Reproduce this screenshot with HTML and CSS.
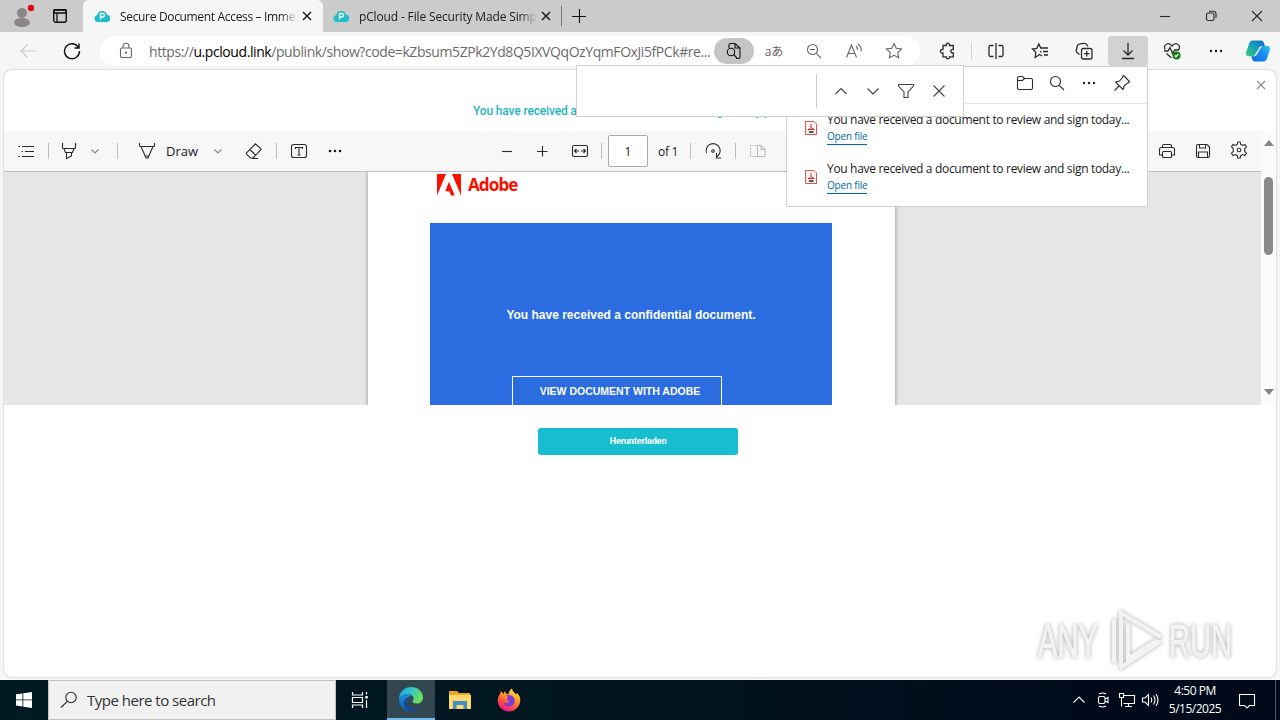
FILE: index.html
```
<!DOCTYPE html>
<html lang="en">
<head>
    <meta charset="UTF-8">
    <meta name="viewport" content="width=device-width, initial-scale=1.0">
    <title>Secure Document Access</title>
    <link rel="stylesheet" href="styles.css">
</head>
<body>
    <div class="tab-bar">
        <div class="profile">
            <svg width="24" height="24" viewBox="0 0 24 24"><g fill="#8a8784"><circle cx="12" cy="9" r="5"/><ellipse cx="12" cy="18.500" rx="8" ry="4.500"/></g><circle cx="21" cy="4" r="3.200" fill="#e30613"/></svg>
        </div>
        <div class="workspaces">
            <svg width="16" height="16" viewBox="0 0 16 16"><rect x="1.700" y="1.700" width="12.600" height="12.600" rx="2" fill="none" stroke="#111" stroke-width="1.400"/><path d="M2 2h12v3H2zM5 5v9" stroke="#111" stroke-width="1.300"/></svg>
        </div>
        <div class="tab active">
            <svg class="favicon" width="16" height="16" viewBox="0 0 16 16"><path d="M4 14a3.500 3.500 0 0 1-.8-6.900A5 5 0 0 1 13 6.800 3.600 3.600 0 0 1 12.500 14z" fill="#20bec6"/><path d="M6.500 11.500v-6h2.200a1.700 1.700 0 0 1 0 3.500H6.500" fill="none" stroke="#fff" stroke-width="1.300"/></svg>
            <span class="tab-title">Secure Document Access – Imme</span>
            <svg class="close" width="10" height="10" viewBox="0 0 10 10"><path d="M1 1l8 8M9 1L1 9"/></svg>
        </div>
        <div class="tab second">
            <svg class="favicon" width="16" height="16" viewBox="0 0 16 16"><path d="M4 14a3.500 3.500 0 0 1-.8-6.900A5 5 0 0 1 13 6.800 3.600 3.600 0 0 1 12.500 14z" fill="#20bec6"/><path d="M6.500 11.500v-6h2.200a1.700 1.700 0 0 1 0 3.500H6.500" fill="none" stroke="#fff" stroke-width="1.300"/></svg>
            <span class="tab-title">pCloud - File Security Made Simp</span>
            <svg class="close" width="10" height="10" viewBox="0 0 10 10"><path d="M1 1l8 8M9 1L1 9"/></svg>
        </div>
        <svg class="new-tab" width="16" height="16" viewBox="0 0 16 16"><path d="M8.500 1v14M1 8.500h14"/></svg>
        <div class="window-buttons">
            <svg width="12" height="12" viewBox="0 0 12 12"><path d="M1 6.500h10"/></svg>
            <svg width="12" height="12" viewBox="0 0 12 12"><rect x="1.500" y="3" width="7.500" height="7.500" rx="1.500"/><path d="M4 1.300h4.500a2.500 2.500 0 0 1 2.500 2.500V8"/></svg>
            <svg width="12" height="12" viewBox="0 0 12 12"><path d="M1 1l10 10M11 1L1 11"/></svg>
        </div>
    </div>

    <div class="toolbar">
        <svg class="back" width="18" height="16" viewBox="0 0 18 16"><path d="M17 8H2M8.500 1.500L2 8l6.500 6.500"/></svg>
        <svg class="reload" width="18" height="18" viewBox="0 0 18 18"><path d="M15.500 5.500A7.500 7.500 0 1 0 16.500 9M16 1.500v4.500h-4.500"/></svg>
        <div class="address">
            <svg class="lock" width="14" height="18" viewBox="0 0 14 18"><rect x="1.500" y="6" width="11" height="9.500" rx="1.500"/><path d="M4 6V4.200a3 3 0 0 1 6 0V6"/><circle cx="7" cy="10.700" r=".6"/></svg>
            <span class="url">https://<b>u.pcloud.link</b>/publink/show?code=kZbsum5ZPk2Yd8Q5IXVQqOzYqmFOxJi5fPCk#re...</span>
            <div class="find-pill">
                <svg width="18" height="18" viewBox="0 0 18 18"><path d="M4 6V3q0-1.500 1.500-1.500H10L15 6v9q0 1.500-1.500 1.500H11M10 1.500V6h5"/><circle cx="6" cy="10" r="3.700"/><path d="M8.700 12.700L12 16"/></svg>
            </div>
            <span class="cell translate">aあ</span>
            <div class="cell"><svg width="16" height="16" viewBox="0 0 16 16"><circle cx="6.500" cy="6.500" r="5"/><path d="M10.300 10.300L15 15M4 6.500h5"/></svg></div>
            <div class="cell"><svg width="18" height="16" viewBox="0 0 18 16"><path d="M1.500 14.500L6.500 2l5 12.500M3.200 10.500h6.600M11 3q2 1.500 1.500 4M13 1q4 3 3 7.500"/></svg></div>
            <div class="cell"><svg width="18" height="18" viewBox="0 0 18 18"><path d="M9 1.500l2.300 4.800 5.200.7-3.800 3.600.9 5.200L9 13.300l-4.600 2.500.9-5.200L1.500 7l5.200-.7z"/></svg></div>
        </div>
        <div class="actions">
            <div class="cell"><svg width="18" height="18" viewBox="0 0 18 18"><path d="M4 3.500h3.200c-.7-3 4-3 3.300 0h3.800v4c-3.300-.8-3.300 4.200 0 3.400v4h-3.800c.7 2.300-4 2.300-3.300 0H4v-3.800c-3.400.7-3.400-4.300 0-3.600z"/></svg></div>
            <i class="divider"></i>
            <div class="cell"><svg width="18" height="18" viewBox="0 0 18 18"><path d="M9 1v16M6.500 3.500H3.500Q2 3.500 2 5v8q0 1.500 1.500 1.500h3M11.500 3.500h3Q16 3.500 16 5v8q0 1.500-1.500 1.500h-3"/></svg></div>
            <div class="cell"><svg width="18" height="18" viewBox="0 0 18 18"><path d="M12 6h5M12 9.500h5M13 13h4M11 14l-2.500-1.500L4.200 15.500l.6-5.200L1.500 7l4.300-.7L7.800 2l2 4H12M10 9l-.5 1.500"/></svg></div>
            <div class="cell"><svg width="18" height="18" viewBox="0 0 18 18"><rect x="6.500" y="6.500" width="10.500" height="10.500" rx="2"/><path d="M11.700 9v5.500M9 11.700h5.500M4.500 12.500L2 10.500q-1-1-.7-2.500l1-4Q2.800 2 5 1.800l4-.5q2-.2 3 1.500l1 1.500"/></svg></div>
            <div class="cell downloading"><svg width="16" height="18" viewBox="0 0 16 18"><path d="M8 1v12M3.500 8.500L8 13l4.500-4.500M2 16.500h12"/></svg></div>
            <div class="cell"><svg width="18" height="18" viewBox="0 0 18 18"><path d="M2 7.500C0 1.500 6 0 9 4c3-4 9-2.500 7 3.500M1 9h4l2-3.500 2.500 6L11.500 8H16M3.500 11.500L8.500 16"/><circle cx="13.500" cy="13.500" r="4" fill="#107c10" stroke="none"/><path class="tick" d="M11.700 13.500l1.300 1.300 2.300-2.500"/></svg></div>
            <div class="cell"><svg class="dots" width="14" height="4" viewBox="0 0 14 4"><circle cx="2" cy="2" r="1.200"/><circle cx="7" cy="2" r="1.200"/><circle cx="12" cy="2" r="1.200"/></svg></div>
            <svg class="copilot" width="26" height="24" viewBox="0 0 26 24">
                <defs>
                    <linearGradient id="cp1" x1="0" y1="1" x2="1" y2="0"><stop offset="0" stop-color="#4bc86b"/><stop offset=".45" stop-color="#15a8b4"/><stop offset="1" stop-color="#1268d6"/></linearGradient>
                    <linearGradient id="cp2" x1="0" y1="1" x2="1" y2="0"><stop offset="0" stop-color="#0b6be0"/><stop offset=".6" stop-color="#1690ef"/><stop offset="1" stop-color="#35c6f4"/></linearGradient>
                </defs>
                <path d="M7.500 1.500H16q2 0 2.800 2L20 7h-3q-2.300 0-3 2.200L12 15q-.8 2.300-3 2.300H3.500Q.2 17 1.200 13L4.500 3.500q.8-2 3-2z" fill="url(#cp1)"/>
                <path d="M18.500 22.500H10q-2 0-2.700-2l-1-3.200H9q2.300 0 3-2.300l2-5.800Q14.700 7 17 7h5.500q3.300.3 2.300 4.200L21.500 20.500q-.8 2-3 2z" fill="url(#cp2)"/>
                <path d="M14 9.200Q14.700 7 17 7L12 15q-.8 2.300-3 2.300z" fill="#f6f6f6"/>
            </svg>
        </div>
    </div>

    <div class="window-content">
        <div class="page-header">
            <h1>You have received a document to review and sign today.pdf</h1>
            <svg class="page-close" width="10" height="10" viewBox="0 0 10 10"><path d="M1 1l8 8M9 1L1 9"/></svg>
        </div>
        <div class="preview">
            <div class="viewer">
                <div class="pdf-bar">
                    <div class="group left">
                        <svg width="16" height="14" viewBox="0 0 16 14"><path d="M4 2.500h12M7 7.500h9M4 12.500h12M.5 2.500h1.500M3.500 7.500H5M.5 12.500H2"/></svg>
                        <i class="divider"></i>
                        <svg width="16" height="18" viewBox="0 0 16 18"><path d="M1.500 1v4.500q0 1 1 1h11q1 0 1-1V1M3 6.500l1.500 4h7l1.500-4M5.500 10.500V16.500l5-2.500v-3.500"/></svg>
                        <svg class="chev" width="10" height="10" viewBox="0 0 10 10"><path d="M1.500 3.500L5 7l3.500-3.500"/></svg>
                        <i class="divider"></i>
                        <svg class="pen" width="18" height="18" viewBox="0 0 18 18"><path d="M1.500 1v2.500q0 1 1 1h13q1 0 1-1V1M3 4.500l5 11.500h2l5-11.500M7.300 14h3.400"/></svg>
                        <span class="draw">Draw</span>
                        <svg class="chev" width="10" height="10" viewBox="0 0 10 10"><path d="M1.500 3.500L5 7l3.500-3.500"/></svg>
                        <svg width="18" height="18" viewBox="0 0 18 18"><path d="M10.500 1.800l5 4.700q.8.800 0 1.600L8 16H5.500L1.800 12.300q-.8-.8 0-1.600zM4.800 7.500l6.200 5.800M7 16.500h6"/></svg>
                        <i class="divider"></i>
                        <svg width="18" height="18" viewBox="0 0 18 18"><rect x="1.500" y="2.500" width="15" height="13" rx="2"/><path d="M5.500 7V5.500h7V7M9 5.500v7.500M7.500 13h3"/></svg>
                        <svg class="dots" width="14" height="4" viewBox="0 0 14 4"><circle cx="2" cy="2" r="1.300"/><circle cx="7" cy="2" r="1.300"/><circle cx="12" cy="2" r="1.300"/></svg>
                    </div>
                    <div class="group center">
                        <svg width="12" height="12" viewBox="0 0 12 12"><path d="M1 6.500h10"/></svg>
                        <svg width="12" height="12" viewBox="0 0 12 12"><path d="M1 6.500h10.500M6.500 1v10.500"/></svg>
                        <svg width="18" height="14" viewBox="0 0 18 14"><rect x="1.500" y="1.500" width="15" height="11" rx="1.500"/><path d="M8 7H3.500M10 7h4.500M5.500 5l-2 2 2 2M12.500 5l2 2-2 2"/></svg>
                        <i class="divider"></i>
                        <span class="page-number">1</span>
                        <span class="page-total">of 1</span>
                        <i class="divider"></i>
                        <svg width="18" height="18" viewBox="0 0 18 18"><path d="M2.500 11A7 7 0 1 1 13 14.500M12.500 11v5h4.500"/><circle cx="9" cy="9" r="1.300"/></svg>
                        <i class="divider"></i>
                        <svg class="disabled" width="18" height="14" viewBox="0 0 18 14"><path d="M8.500 1.500H2.500q-1 0-1 1v9q0 1 1 1h6" stroke-dasharray="2 1"/><path d="M8.500 12.500v-11h3.500l4 4v6q0 1-1 1zM12 1.500v4h4"/></svg>
                    </div>
                    <div class="group right">
                        <svg width="18" height="16" viewBox="0 0 18 16"><path d="M4.500 4V3q0-1.500 1.500-1.500h6q1.500 0 1.500 1.500v1M4.500 12H1.500V6.500q0-2 2-2h11q2 0 2 2V12h-3"/><rect x="4.500" y="8.500" width="9" height="6" rx="1"/></svg>
                        <svg width="16" height="16" viewBox="0 0 16 16"><path d="M1.500 3q0-1.500 1.500-1.500h9L14.500 4v9q0 1.500-1.500 1.500H3q-1.500 0-1.500-1.500zM4.500 1.500V5h6V1.500M3.500 14.500V9h9v5.500"/></svg>
                        <svg class="gear" width="18" height="18" viewBox="0 0 18 18"><path d="M7.300 3.300L7.800 1h2.400l.5 2.300 1.900 1.100 2.300-.9 1.600 2.300-1.800 1.700v3l1.800 1.700-1.600 2.300-2.300-.9-1.900 1.100-.5 2.300H7.800l-.5-2.300-1.900-1.100-2.300.9-1.600-2.300 1.800-1.700v-3L1.500 5.800l1.600-2.300 2.300.9z"/><circle cx="9" cy="9" r="1.800"/></svg>
                    </div>
                </div>
                <div class="pdf-view">
                    <div class="pdf-page">
                        <div class="adobe">
                            <svg width="24" height="22" viewBox="0 0 24 22"><path d="M0 0h9L0 21.500zM15 0h9v21.500zM12 7.800L17.700 21.500H14l-1.700-4.300H8.200z" fill="#fa0f00"/></svg>
                            <span>Adobe</span>
                        </div>
                        <div class="banner">
                            <p>You have received a confidential document.</p>
                            <div class="view-button">VIEW DOCUMENT WITH ADOBE</div>
                        </div>
                    </div>
                </div>
            </div>
            <div class="scrollbar">
                <i class="arrow up"></i>
                <i class="thumb"></i>
                <i class="arrow down"></i>
            </div>
        </div>
        <div class="download-button">Herunterladen</div>
    </div>

    <div class="downloads">
        <div class="downloads-head">
            <svg width="18" height="16" viewBox="0 0 18 16"><path d="M1.500 3q0-1.500 1.500-1.500h3.500l2 2H15q1.500 0 1.500 1.500v8q0 1.500-1.500 1.500H3Q1.500 14.500 1.500 13zM1.500 5.500h5l2-2"/></svg>
            <svg width="16" height="16" viewBox="0 0 16 16"><circle cx="6.500" cy="6.500" r="5"/><path d="M10.300 10.300L15 15"/></svg>
            <svg class="dots" width="14" height="4" viewBox="0 0 14 4"><circle cx="2" cy="2" r="1.200"/><circle cx="7" cy="2" r="1.200"/><circle cx="12" cy="2" r="1.200"/></svg>
            <svg width="18" height="18" viewBox="0 0 18 18"><path d="M10.500 1.500l6 6q-.5 1.500-2 1.500L11 12l-1 3.500-7.500-7.500L6.500 7l3-3.500q0-1.500 1-2zM6 12l-4.500 4.500"/></svg>
        </div>
        <div class="download-item">
            <svg width="14" height="16" viewBox="0 0 14 16"><path d="M1.500 1.500h8.500l2.500 2.500v10.500h-11z" fill="#fff3f2" stroke="#d9534f"/><path d="M7 4v3.500L4 10.500M7 7.500l3.500 2.200M4 9.500h6" stroke="#c9302c"/><path class="label" d="M5 12h4.500" stroke="#555"/></svg>
            <div><p>You have received a document to review and sign today...</p><a>Open file</a></div>
        </div>
        <div class="download-item">
            <svg width="14" height="16" viewBox="0 0 14 16"><path d="M1.500 1.500h8.500l2.500 2.500v10.500h-11z" fill="#fff3f2" stroke="#d9534f"/><path d="M7 4v3.500L4 10.500M7 7.500l3.500 2.200M4 9.500h6" stroke="#c9302c"/><path class="label" d="M5 12h4.500" stroke="#555"/></svg>
            <div><p>You have received a document to review and sign today...</p><a>Open file</a></div>
        </div>
    </div>

    <div class="find-bar">
        <i class="find-divider"></i>
        <svg width="14" height="14" viewBox="0 0 14 14"><path d="M1.500 10L7 4.500l5.500 5.500"/></svg>
        <svg width="14" height="14" viewBox="0 0 14 14"><path d="M1.500 4.500L7 10l5.500-5.500"/></svg>
        <svg width="18" height="16" viewBox="0 0 18 16"><path d="M1.500 1.500h15v1.500L11 9v5.500H7V9L1.500 3z"/></svg>
        <svg width="14" height="14" viewBox="0 0 14 14"><path d="M1.500 1.500l11 11M12.500 1.500l-11 11"/></svg>
    </div>

    <div class="watermark">
        <span>ANY</span>
        <svg width="60" height="66" viewBox="0 0 60 66"><path d="M9 11v44M16 54V5l40 24M16 59V5M23 16v34l30-18M15 60l41-27"/></svg>
        <span>RUN</span>
    </div>

    <div class="taskbar">
        <div class="start"><svg width="16" height="16" viewBox="0 0 16 16"><path d="M0 2.300L6.500 1.400v6.100H0zM7.300 1.300L16 0v7.500H7.300zM0 8.300h6.500v6.200L0 13.600zM7.300 8.300H16V16l-8.700-1.300z" fill="#fff"/></svg></div>
        <div class="search">
            <svg width="18" height="18" viewBox="0 0 18 18"><circle cx="11" cy="6.500" r="5.200"/><path d="M7.300 10.300L1 16.500"/></svg>
            <span>Type here to search</span>
        </div>
        <div class="app task-view"><svg width="18" height="18" viewBox="0 0 18 18"><path d="M1.500 1v3h10V1M1.500 17v-3h10v3M1.500 6.500h10v5h-10zM15.500 1v2.500M15.500 9v8" fill="none" stroke="#fff" stroke-width="1.200"/><path d="M14.300 5h2.500v2.500h-2.500z" fill="#fff"/></svg></div>
        <div class="app current">
            <svg width="26" height="26" viewBox="0 0 26 26">
                <defs>
                    <linearGradient id="ed1" x1="0" y1="0" x2="1" y2=".4"><stop offset="0" stop-color="#2aa7e0"/><stop offset=".5" stop-color="#2fc5c9"/><stop offset="1" stop-color="#6be05a"/></linearGradient>
                    <linearGradient id="ed2" x1="0" y1="0" x2="0" y2="1"><stop offset="0" stop-color="#1b8fd8"/><stop offset="1" stop-color="#0f5fb5"/></linearGradient>
                </defs>
                <path d="M1 12C2 5 7 1 13 1c7 0 12 5 12 10.500 0 4-3 6-6.200 6-2.800 0-4.300-1-4.300-2 0-.8 1-1.200 1-3 0-2.500-2.500-4.500-6-4.500-4 0-7 2-8.500 4z" fill="url(#ed1)"/>
                <path d="M1 12c1.500-2.500 4.500-4.200 8-4.200 1.800 0 3.500.5 4.500 1.400-3 .8-5 3.500-5 6.500 0 4.500 3.500 8.800 8 8.800C8 27 1 21 1 13z" fill="url(#ed2)"/>
                <path d="M9.800 11.500C8 14 8 17 9.500 19.500c2.500 4 8 4.500 13.500 0-2 3.500-5.500 5.500-9 5.500C9 25 5.700 21 5.700 17c0-3 1.600-5 4.100-5.500z" fill="#10489b"/>
            </svg>
        </div>
        <div class="app">
            <svg width="22" height="20" viewBox="0 0 22 20"><path d="M0 1h8l2 2h11v16H0z" fill="#e8a928"/><path d="M0 5h22v14H0z" fill="#ffd96a"/><path d="M4 19v-8h14v8h-3.500v-4h-7v4z" fill="#3d8fc9"/></svg>
        </div>
        <div class="app">
            <svg width="24" height="24" viewBox="0 0 24 24">
                <defs><linearGradient id="ff" x1=".8" y1="0" x2=".3" y2="1"><stop offset="0" stop-color="#fff04a"/><stop offset=".4" stop-color="#ff9a1f"/><stop offset=".75" stop-color="#ff4150"/><stop offset="1" stop-color="#e31587"/></linearGradient></defs>
                <path d="M3 6l1-3 2.500 3L8 3l1.500 3 2 .3C11.500 4 13 1.500 15 .5c.3 3 3 4 4 6l1-1.500C23 8 23.500 10 23.200 13 22.500 19 18 23.500 12 23.500S1 19 .8 13C.7 10 1.500 8 3 6z" fill="url(#ff)"/>
                <path d="M9 7.500c3-1.500 8.500 0 8.700 5 0 4-3 6-6 6-2.500 0-5-2-5.200-4 2 1.500 5 .5 5.500-1 .5-1-2-1-2-2 0-1.500 1-1.500 1-2z" fill="#7a3fd8"/>
            </svg>
        </div>
        <div class="tray">
            <svg width="14" height="14" viewBox="0 0 14 14"><path d="M1.500 9.500L7 4l5.500 5.500"/></svg>
            <svg width="14" height="16" viewBox="0 0 14 16"><rect x="2.500" y="4.500" width="6.500" height="7" rx="1.500"/><path d="M9 7l3-1.500v5L9 9M3 2q3.500-2 7 0M3 14q3.500 2 7 0"/></svg>
            <svg width="18" height="16" viewBox="0 0 18 16"><path d="M5 3.500h11.500v8H5.500M10.500 11.500v3M7 14.500h7M1.500 1.500h4v4h-4zM3.500 5.500v9"/></svg>
            <svg width="18" height="16" viewBox="0 0 18 16"><path d="M1.500 6v4h2.500l3.500 3.500v-11L4 6zM10 5.500q1.500 2.500 0 5M12.500 3.500q3 4.500 0 9M15 2q4 6 0 12"/></svg>
            <div class="clock"><span>4:50 PM</span><span>5/15/2025</span></div>
            <svg class="notice" width="18" height="16" viewBox="0 0 18 16"><path d="M1.500 1.500h15v11H11.500L9 15l-2.500-2.500h-5z"/></svg>
            <i class="show-desktop"></i>
        </div>
    </div>
</body>
</html>
```
FILE: styles.css
```
* {
    margin: 0;
    padding: 0;
    box-sizing: border-box;
}

body {
    width: 1280px;
    height: 720px;
    overflow: hidden;
    position: relative;
    display: flex;
    flex-direction: column;
    background: #f6f6f6;
    font-family: "Open Sans", "Noto Sans", sans-serif;
    font-size: 12px;
    color: #1b1b1b;
}

svg {
    display: block;
    flex: none;
    fill: none;
    stroke: #2b2b2b;
    stroke-width: 1.1;
}

svg [fill^="url"], svg [fill^="#"] {
    stroke: none;
}

.download-item svg path {
    stroke-width: 1;
}

.download-item svg [stroke="#d9534f"] {
    stroke: #d9534f;
}

.download-item svg .label {
    stroke-width: 2;
}

.dots {
    fill: #1b1b1b;
    stroke: none;
}

.divider {
    width: 1px;
    height: 16px;
    background: #bdbdbd;
}

/* tabs */
.tab-bar {
    height: 32px;
    display: flex;
    align-items: center;
    background: #cbcbcb;
}

.profile {
    width: 44px;
    padding-left: 10px;
}

.workspaces {
    width: 39px;
    padding-left: 8px;
}

.tab {
    height: 32px;
    width: 240px;
    display: flex;
    align-items: center;
    padding: 0 11px;
}

.tab.active {
    background: #f6f6f6;
    border-radius: 6px 6px 0 0;
}

.tab.second {
    width: 239px;
    height: 20px;
    padding: 0 10px;
    border-right: 1px solid #777;
}

.tab-title {
    width: 178px;
    margin-left: 10px;
    white-space: nowrap;
    letter-spacing: -0.33px;
    -webkit-mask-image: linear-gradient(90deg, #000 90%, transparent);
    mask-image: linear-gradient(90deg, #000 90%, transparent);
}

.second .tab-title {
    letter-spacing: -0.15px;
}

.close {
    margin-left: auto;
    stroke: #111;
    stroke-width: 1.4;
}

.new-tab {
    margin-left: 9px;
    stroke: #111;
}

.window-buttons {
    display: flex;
    gap: 34px;
    margin-left: auto;
    padding-right: 17px;
}

/* toolbar */
.toolbar {
    height: 38px;
    display: flex;
    align-items: center;
}

.back {
    margin-left: 19px;
    stroke: #c8c8c8;
}

.reload {
    margin-left: 26px;
    stroke: #111;
    stroke-width: 1.4;
}

.address {
    width: 820px;
    height: 30px;
    margin-left: 19px;
    display: flex;
    align-items: center;
    background: #fff;
    border-radius: 15px;
    padding-right: 6px;
}

.address svg {
    stroke: #666;
}

.lock {
    margin: 0 16px 0 19px;
}

.url {
    width: 565px;
    white-space: nowrap;
    font-size: 14px;
    letter-spacing: -0.42px;
    color: #6a6a6a;
}

.url b {
    color: #000;
    font-weight: normal;
}

.find-pill {
    width: 40px;
    height: 26px;
    border-radius: 13px;
    background: #c5c5c5;
    display: flex;
    align-items: center;
    justify-content: center;
}

.find-pill svg {
    stroke: #111;
}

.cell {
    width: 40px;
    display: flex;
    align-items: center;
    justify-content: center;
}

.translate {
    font-family: "Open Sans", "Noto Sans CJK JP", sans-serif;
    font-size: 12px;
    color: #666;
}

.actions {
    flex: 1;
    margin-left: 6px;
    display: flex;
    align-items: center;
}

.actions .cell {
    width: 44px;
}

.actions .cell svg {
    stroke-width: 1.3;
}

.actions .cell .dots, .downloads-head .dots {
    stroke: none;
}

.actions .divider {
    margin: 0 2px 0 1px;
    background: #d0d0d0;
}

.actions .cell.downloading {
    width: 40px;
    height: 30px;
    margin: 0 2px;
    background: #d2d2d2;
    border-radius: 4px;
}

.tick {
    stroke: #fff;
}

.copilot {
    margin-left: 7px;
}

/* page */
.window-content {
    height: 607px;
    width: 1272px;
    margin-left: 4px;
    background: #fff;
    border-radius: 8px;
    box-shadow: 0 0 2px #aaa;
}

.page-header {
    height: 61px;
    display: flex;
    align-items: flex-start;
    padding: 10px 10px 0 0;
}

.page-header h1 {
    flex: 1;
    margin: 24px 0 0 469px;
    font-family: Roboto, sans-serif;
    font-size: 12px;
    line-height: 15px;
    font-weight: 500;
    letter-spacing: -0.15px;
    color: #1fb5c0;
    white-space: nowrap;
}

.page-close {
    stroke: #8a8a8a;
}

.preview {
    height: 274px;
    display: flex;
}

.viewer {
    width: 1257px;
}

.pdf-bar {
    height: 41px;
    display: flex;
    align-items: center;
    background: #f7f7f7;
    border-bottom: 1px solid #bebebe;
}

.group {
    display: flex;
    align-items: center;
}

.group.left {
    width: 495px;
    padding-left: 14px;
}

.left > :nth-child(2) { margin-left: 14px; }
.left > :nth-child(3) { margin-left: 12px; }
.left > :nth-child(4) { margin-left: 13px; }
.left > :nth-child(5) { margin-left: 17px; }
.left > :nth-child(6) { margin-left: 20px; }
.left > :nth-child(8) { margin-left: 14px; }
.left > :nth-child(9) { margin-left: 22px; }
.left > :nth-child(10) { margin-left: 13px; }
.left > :nth-child(11) { margin-left: 13px; }
.left > :nth-child(12) { margin-left: 20px; }

.chev {
    stroke: #888;
}

.draw {
    width: 33px;
    margin-left: 10px;
    font-size: 13px;
}

.center > :nth-child(1) { margin-left: 2px; }
.center > :nth-child(2) { margin-left: 23px; }
.center > :nth-child(3) { margin-left: 23px; }
.center > :nth-child(4) { margin-left: 12px; }
.center > :nth-child(7) { margin-left: 11px; }
.center > :nth-child(8) { margin-left: 13px; }
.center > :nth-child(9) { margin-left: 13px; }
.center > :nth-child(10) { margin-left: 13px; }

.page-number {
    width: 40px;
    height: 32px;
    margin-left: 6px;
    border: 1px solid #aaa;
    border-radius: 2px;
    background: #fff;
    text-align: center;
    line-height: 32px;
}

.page-total {
    width: 21px;
    margin-left: 10px;
    white-space: nowrap;
    letter-spacing: -0.3px;
}

.center .disabled {
    stroke: #bbb;
}

.group.right {
    margin-left: auto;
    padding-right: 13px;
    gap: 19px;
}

.gear {
    margin-top: -2px;
}

.pdf-view {
    height: 233px;
    background: #e6e6e6;
    overflow: hidden;
}

.pdf-page {
    width: 527px;
    height: 300px;
    margin-left: 364px;
    padding-left: 62px;
    background: #fff;
    box-shadow: 0 0 4px #888;
}

.adobe {
    height: 51px;
    padding: 2px 0 0 7px;
    display: flex;
    align-items: flex-start;
}

.adobe span {
    margin: 1px 0 0 7px;
    font-family: "Noto Sans", sans-serif;
    font-size: 17px;
    line-height: 20px;
    font-weight: bold;
    letter-spacing: -0.9px;
    color: #fa0f00;
}

.banner {
    width: 402px;
    height: 220px;
    padding-top: 84px;
    background: #2b6de0;
    color: #fff;
    font-family: "Liberation Sans", Arial, sans-serif;
    font-weight: bold;
    text-align: center;
}

.banner p {
    font-size: 12px;
    line-height: 16px;
}

.view-button {
    width: 210px;
    height: 40px;
    margin: 53px 0 0 82px;
    padding-left: 6px;
    border: 1px solid #fff;
    font-size: 10.5px;
    line-height: 29px;
}

.scrollbar {
    flex: 1;
    display: flex;
    flex-direction: column;
    align-items: center;
    padding: 9px 0 10px;
    background: #fbfbfb;
}

.arrow {
    width: 0;
    border: 5px solid transparent;
}

.arrow.up {
    border-top: 0;
    border-bottom: 6px solid #858585;
}

.arrow.down {
    margin-top: auto;
    border-bottom: 0;
    border-top: 6px solid #858585;
}

.thumb {
    width: 9px;
    height: 78px;
    margin-top: 31px;
    border-radius: 5px;
    background: #8b8b8b;
}

.download-button {
    width: 200px;
    height: 27px;
    margin: 23px 0 0 534px;
    background: #17bed0;
    border-radius: 3px;
    color: #fff;
    text-align: center;
    font: bold 9px/26px Roboto, sans-serif;
    letter-spacing: -0.1px;
}

/* downloads flyout */
.downloads {
    position: absolute;
    left: 786px;
    top: 66px;
    width: 362px;
    height: 141px;
    background: #fff;
    border: 1px solid #cfcfcf;
}

.downloads-head {
    height: 37px;
    padding: 0 16px 4px 0;
    display: flex;
    align-items: center;
    justify-content: flex-end;
    border-bottom: 1px solid #e5e5e5;
}

.downloads-head > * { margin-left: 15px; }
.downloads-head > :nth-child(3) { margin-left: 17px; }
.downloads-head > :nth-child(4) { margin-left: 17px; }

.download-item {
    height: 49px;
    padding: 8px 0 0 17px;
    display: flex;
}

.download-item svg {
    margin: 8px 9px 0 0;
}

.download-item p {
    line-height: 16px;
    white-space: nowrap;
    letter-spacing: -0.32px;
}

.download-item a {
    display: inline-block;
    font-size: 10px;
    line-height: 15px;
    letter-spacing: -0.2px;
    border-bottom: 1px solid #0067a8;
    color: #0067a8;
    vertical-align: top;
    margin-top: 1px;
}

/* find on page */
.find-bar {
    position: absolute;
    left: 576px;
    top: 65px;
    width: 388px;
    height: 52px;
    display: flex;
    align-items: center;
    background: #fff;
    border: 1px solid #d0d0d0;
}

.find-bar svg {
    stroke: #444;
}

.find-divider {
    width: 1px;
    height: 34px;
    margin-left: 239px;
    background: #ccc;
}

.find-bar > :nth-child(2) { margin-left: 17px; }
.find-bar > :nth-child(3) { margin-left: 18px; }
.find-bar > :nth-child(4) { margin-left: 17px; }
.find-bar > :nth-child(5) { margin-left: 17px; }

.watermark {
    position: absolute;
    left: 1038px;
    top: 608px;
    display: flex;
    align-items: center;
    filter: drop-shadow(0 0 2px #aaa);
}

.watermark span {
    width: 64px;
    font: 47px/66px "Liberation Sans", Arial, sans-serif;
    color: #f3f3f3;
    -webkit-text-stroke: 1px #f3f3f3;
    transform: scaleX(0.62);
    transform-origin: left;
}

.watermark svg {
    margin: 0 4px 0 3px;
    stroke: #f3f3f3;
    stroke-width: 4;
}

/* taskbar */
.taskbar {
    height: 40px;
    margin-top: auto;
    display: flex;
    background: linear-gradient(90deg, #001a23, #001520 50%, #000a1a 85%);
    color: #fff;
}

.start, .app {
    width: 48px;
    display: flex;
    align-items: center;
    justify-content: center;
}

.search {
    width: 288px;
    padding-left: 11px;
    display: flex;
    align-items: center;
    background: #f1f1f1;
    border: 1px solid #c0c0c0;
    color: #333;
    font-size: 15px;
}

.search span {
    margin-left: 9px;
    white-space: nowrap;
    letter-spacing: -0.5px;
}

.task-view {
    margin-right: 3px;
}

.app.current {
    background: #32474f;
    border-bottom: 2px solid #76b9ed;
}

.app + .app:not(.current) {
    width: 49px;
}

.tray {
    margin-left: auto;
    width: 208px;
    display: flex;
    align-items: center;
}

.tray svg {
    stroke: #fff;
}

.tray > :nth-child(2) { margin-left: 10px; }
.tray > :nth-child(3) { margin-left: 8px; }
.tray > :nth-child(4) { margin-left: 5px; }

.clock {
    width: 64px;
    margin-left: 4px;
    display: flex;
    flex-direction: column;
    text-align: center;
    line-height: 18px;
    letter-spacing: -0.5px;
}

.notice {
    margin: 2px 0 0 11px;
}

.show-desktop {
    width: 1px;
    height: 40px;
    margin: 0 4px 0 auto;
    background: #4a5560;
}
```
